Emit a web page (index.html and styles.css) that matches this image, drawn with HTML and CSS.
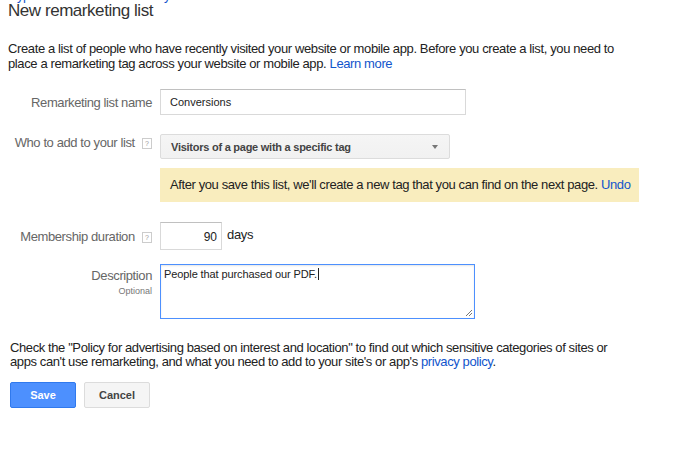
FILE: index.html
```html
<!DOCTYPE html>
<html>
<head>
<meta charset="utf-8">
<link rel="stylesheet" href="styles.css">
</head>
<body>
<div class="page">
  <div class="crumbs"><a>Cypress Hotel</a> › <a>Shared library</a> › <a>Audiences</a></div>
  <h1 class="title">New remarketing list</h1>
  <p class="intro">Create a list of people who have recently visited your website or mobile app. Before you create a list, you need to place a remarketing tag across your website or mobile app. <a class="link">Learn more</a></p>

  <div class="row row-name">
    <div class="label">Remarketing list name</div>
    <div class="field"><div class="input name-input">Conversions</div></div>
  </div>

  <div class="row row-who">
    <div class="label">Who to add to your list <span class="help">?</span></div>
    <div class="field">
      <div class="select">
        <span>Visitors of a page with a specific tag</span>
        <span class="caret"></span>
      </div>
      <div class="notice">After you save this list, we'll create a new tag that you can find on the next page. <a class="link">Undo</a></div>
    </div>
  </div>

  <div class="row row-dur">
    <div class="label">Membership duration <span class="help">?</span></div>
    <div class="field inline">
      <div class="input dur-input">90</div>
      <span class="days">days</span>
    </div>
  </div>

  <div class="row row-desc">
    <div class="label desc-label">Description<span class="optional">Optional</span></div>
    <div class="field">
      <div class="textarea">People that purchased our PDF.<span class="cursor"></span>
        <svg class="grip" width="8" height="8" viewBox="0 0 8 8"><path d="M7 1L1 7M7 4L4 7" stroke="#777" stroke-width="1"/></svg>
      </div>
    </div>
  </div>

  <p class="policy">Check the "Policy for advertising based on interest and location" to find out which sensitive categories of sites or apps can't use remarketing, and what you need to add to your site's or app's <a class="link">privacy policy</a>.</p>

  <div class="buttons">
    <button class="btn btn-save">Save</button>
    <button class="btn btn-cancel">Cancel</button>
  </div>
</div>
</body>
</html>
```

FILE: styles.css
```css
html, body {
  margin: 0;
  padding: 0;
  background: #fff;
}
body {
  font-family: Arial, "Liberation Sans", sans-serif;
  color: #222;
}
.page {
  padding: 0 8px;
}
.crumbs {
  font-size: 13px;
  line-height: 15px;
  letter-spacing: -0.4px;
  margin-top: -12px;
  color: #333;
  height: 15px;
}
.crumbs a {
  color: #15c;
}
.title {
  font-size: 17px;
  letter-spacing: -0.45px;
  font-weight: normal;
  line-height: 22px;
  margin: -3px 0 0 0;
  color: #333;
}
.intro {
  font-size: 13px;
  letter-spacing: -0.38px;
  line-height: 15px;
  margin: 19px 0 0 0;
  color: #222;
  width: 620px;
}
.link {
  color: #15c;
  cursor: pointer;
}
.row {
  display: flex;
  align-items: flex-start;
}
.label {
  width: 144px;
  flex: none;
  text-align: right;
  font-size: 13px;
  letter-spacing: -0.4px;
  color: #666;
  padding-right: 8px;
  white-space: nowrap;
}
.help {
  display: inline-block;
  width: 8px;
  height: 9px;
  border: 1px solid #ccc;
  font-size: 7px;
  line-height: 9px;
  letter-spacing: 0;
  text-align: center;
  color: #999;
  vertical-align: 1px;
  margin-left: 4px;
}
.field {
  flex: none;
}
.row-name {
  margin-top: 18px;
}
.row-name .label {
  padding-top: 6px;
}
.input {
  box-sizing: border-box;
  border: 1px solid #d9d9d9;
  border-top-color: #c0c0c0;
  font-size: 11px;
  color: #222;
  background: #fff;
}
.name-input {
  width: 306px;
  height: 26px;
  line-height: 24px;
  padding-left: 9px;
}
.row-who {
  margin-top: 19px;
}
.row-who .label {
  padding-top: 1px;
}
.select {
  box-sizing: border-box;
  width: 290px;
  height: 25px;
  border: 1px solid #dcdcdc;
  border-radius: 2px;
  background: linear-gradient(#f5f5f5, #f1f1f1);
  font-size: 11px;
  font-weight: bold;
  color: #444;
  display: flex;
  align-items: center;
  justify-content: space-between;
  padding: 0 11px 0 10px;
  letter-spacing: -0.25px;
}
.caret {
  width: 0;
  height: 0;
  border-left: 3px solid transparent;
  border-right: 3px solid transparent;
  border-top: 4px solid #777;
}
.notice {
  margin-top: 9px;
  width: 479px;
  box-sizing: border-box;
  height: 34px;
  background: #f9edbe;
  font-size: 13px;
  letter-spacing: -0.4px;
  line-height: 34px;
  padding-left: 10px;
  color: #222;
  white-space: nowrap;
}
.row-dur {
  margin-top: 20px;
}
.row-dur .label {
  padding-top: 7px;
}
.inline {
  display: flex;
  align-items: flex-start;
}
.dur-input {
  width: 62px;
  height: 28px;
  line-height: 28px;
  text-align: right;
  padding-right: 4px;
  font-size: 12px;
}
.days {
  font-size: 13px;
  letter-spacing: -0.3px;
  color: #222;
  margin-left: 5px;
  margin-top: 5px;
}
.row-desc {
  margin-top: 14px;
}
.desc-label {
  padding-top: 4px;
  line-height: 15px;
}
.optional {
  display: block;
  font-size: 9px;
  letter-spacing: 0;
  line-height: 11px;
  margin-top: 3px;
  color: #777;
}
.textarea {
  position: relative;
  box-sizing: border-box;
  width: 315px;
  height: 55px;
  border: 1px solid #4d90fe;
  box-shadow: inset 0 1px 2px rgba(0,0,0,0.1);
  font-size: 11px;
  letter-spacing: -0.1px;
  line-height: 14px;
  padding: 2px 3px;
  color: #222;
}
.cursor {
  display: inline-block;
  width: 1px;
  height: 12px;
  background: #222;
  vertical-align: -2px;
  margin-left: 1px;
}
.grip {
  position: absolute;
  right: 1px;
  bottom: 1px;
}
.policy {
  font-size: 13px;
  letter-spacing: -0.4px;
  line-height: 14px;
  margin: 22px 0 0 2px;
  color: #222;
  width: 610px;
}
.buttons {
  display: flex;
  gap: 8px;
  margin-top: 13px;
  margin-left: 2px;
}
.btn {
  box-sizing: border-box;
  height: 26px;
  width: 66px;
  font-family: Arial, "Liberation Sans", sans-serif;
  font-size: 11px;
  font-weight: bold;
  border-radius: 2px;
  padding: 0;
}
.btn-save {
  background: #4d90fe;
  border: 1px solid #3079ed;
  color: #fff;
}
.btn-cancel {
  background: #f5f5f5;
  border: 1px solid #dcdcdc;
  color: #444;
}
```
